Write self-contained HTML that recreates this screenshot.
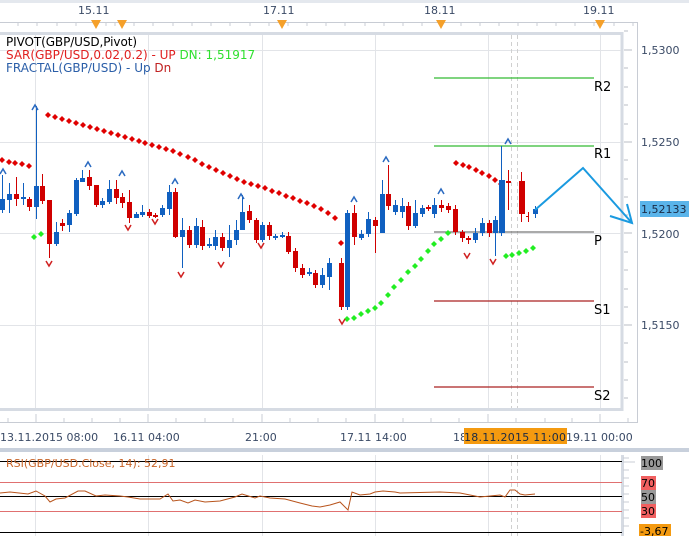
<!DOCTYPE html>
<html><head><meta charset="utf-8"><style>
body{margin:0;width:689px;height:536px;overflow:hidden;background:#fff;font-family:"DejaVu Sans",sans-serif}
svg{position:absolute;left:0;top:0}
</style></head><body>
<svg width="689" height="536" viewBox="0 0 689 536" font-family="DejaVu Sans, sans-serif">
<rect x="0" y="0" width="689" height="536" fill="#fff"/>
<rect x="0" y="0" width="689" height="3" fill="#e4e8ee"/>
<g fill="#3a4a66" font-size="11">
<text x="78" y="14">15.11</text><text x="263" y="14">17.11</text><text x="424" y="14">18.11</text><text x="583" y="14">19.11</text>
</g>
<line x1="0" y1="22.5" x2="637" y2="22.5" stroke="#c8ccd4"/>
<g stroke="#c8ccd4">
<path d="M18 22v4M37 22v4M57 22v4M76 22v4M96 22v4M106 22v4M115 22v4M134 22v4M153 22v4M173 22v4M192 22v4M211 22v4M230 22v4M250 22v4M269 22v4M288 22v4M307 22v4M326 22v4M345 22v4M365 22v4M384 22v4M403 22v4M422 22v4M441 22v4M461 22v4M480 22v4M499 22v4M518 22v4M537 22v4M556 22v4M575 22v4M594 22v4M614 22v4M633 22v4"/>
</g>
<g fill="#f5a02a">
<path d="M91 20h10l-5 9z"/><path d="M117 20h10l-5 9z"/><path d="M277 20h10l-5 9z"/><path d="M436 20h10l-5 9z"/><path d="M595 20h10l-5 9z"/>
</g>
<line x1="637.5" y1="22" x2="637.5" y2="423" stroke="#c8ccd4"/>
<rect x="-3" y="33.5" width="625" height="376" fill="#fff" stroke="#d6dbe3" stroke-width="3"/>
<g stroke="#e2e4e8">
<path d="M35.5 35v373M148.5 35v373M262.5 35v373M375.5 35v373M488.5 35v373M600.5 35v373"/>
<path d="M0 50.5h621M0 142.5h621M0 233.5h621M0 325.5h621"/>
</g>
<path d="M511.5 35v373M517.5 35v373" stroke="#d0d0d0" stroke-dasharray="4,3"/>
<g stroke="#b8bcc4">
<path d="M624 50h8M624 142h8M624 233h8M624 325h8"/>
<path d="M624 68h4M624 87h4M624 105h4M624 124h4M624 160h4M624 179h4M624 197h4M624 215h4M624 252h4M624 270h4M624 289h4M624 307h4M624 343h4M624 362h4M624 380h4M624 398h4M624 31h4"/>
</g>
<g fill="#3a4a66" font-size="11">
<text x="641" y="54">1,5300</text><text x="641" y="146">1,5250</text><text x="641" y="238">1,5200</text><text x="641" y="329">1,5150</text>
</g>
<rect x="640" y="201" width="49" height="16" fill="#5ab4ea"/>
<text x="641" y="213" fill="#1a2a44" font-size="11">1,52133</text>
<g font-size="12">
<text x="6" y="46" fill="#000" textLength="131">PIVOT(GBP/USD,Pivot)</text>
<text x="6" y="59" fill="#e02020">SAR(GBP/USD,0.02,0.2) -  UP  <tspan fill="#30e030">DN: 1,51917</tspan></text>
<text x="6" y="72" fill="#2a5ea8">FRACTAL(GBP/USD) -  Up  <tspan fill="#c02020">Dn</tspan></text>
</g>
<g stroke-width="1.2">
<path d="M434 78h160M434 146h160" stroke="#33bb33"/>
<path d="M434 232h160" stroke="#777"/>
<path d="M434 301h160M434 387h160" stroke="#aa2020"/>
</g>
<g font-size="13" fill="#000"><text x="594" y="91">R2</text><text x="594" y="158">R1</text><text x="594" y="245">P</text><text x="594" y="314">S1</text><text x="594" y="400">S2</text></g>
<g fill="#e00000">
<path id="d" d="M0-3l3 3-3 3-3-3z" transform="translate(2,160)"/>
<use href="#d" x="7" y="2"/><use href="#d" x="13" y="3"/><use href="#d" x="20" y="4"/><use href="#d" x="27" y="6"/>
<use href="#d" x="46" y="-45"/><use href="#d" x="53" y="-43"/><use href="#d" x="60" y="-41"/><use href="#d" x="67" y="-39"/><use href="#d" x="74" y="-37"/><use href="#d" x="81" y="-35"/><use href="#d" x="88" y="-33"/><use href="#d" x="95" y="-31"/><use href="#d" x="102" y="-29"/><use href="#d" x="109" y="-27"/><use href="#d" x="116" y="-25"/><use href="#d" x="123" y="-23"/><use href="#d" x="130" y="-21"/><use href="#d" x="137" y="-19"/><use href="#d" x="143" y="-17"/><use href="#d" x="150" y="-15"/><use href="#d" x="157" y="-13"/><use href="#d" x="164" y="-11"/><use href="#d" x="171" y="-9"/><use href="#d" x="178" y="-6"/><use href="#d" x="186" y="-3"/><use href="#d" x="193" y="0"/><use href="#d" x="200" y="4"/><use href="#d" x="207" y="7"/><use href="#d" x="214" y="10"/><use href="#d" x="221" y="13"/><use href="#d" x="228" y="16"/><use href="#d" x="235" y="19"/><use href="#d" x="242" y="22"/><use href="#d" x="249" y="24"/><use href="#d" x="256" y="26"/><use href="#d" x="263" y="28"/><use href="#d" x="270" y="31"/><use href="#d" x="277" y="33"/><use href="#d" x="284" y="36"/><use href="#d" x="291" y="38"/><use href="#d" x="298" y="41"/><use href="#d" x="305" y="43"/><use href="#d" x="312" y="46"/><use href="#d" x="319" y="49"/><use href="#d" x="326" y="53"/><use href="#d" x="333" y="58"/><use href="#d" x="339" y="83"/>
<use href="#d" x="454" y="3"/><use href="#d" x="461" y="5"/><use href="#d" x="467" y="7"/><use href="#d" x="474" y="10"/><use href="#d" x="480" y="13"/><use href="#d" x="487" y="16"/><use href="#d" x="493" y="20"/><use href="#d" x="499" y="24"/>
</g>
<g fill="#22ee22">
<path id="g" d="M0-3l3 3-3 3-3-3z" transform="translate(34,237)"/>
<use href="#g" x="7" y="-3"/>
<use href="#g" x="313" y="82"/><use href="#g" x="320" y="81"/><use href="#g" x="327" y="77"/><use href="#g" x="334" y="74"/><use href="#g" x="341" y="71"/><use href="#g" x="347" y="66"/><use href="#g" x="354" y="58"/><use href="#g" x="360" y="50"/><use href="#g" x="367" y="43"/><use href="#g" x="374" y="35"/><use href="#g" x="381" y="29"/><use href="#g" x="387" y="22"/><use href="#g" x="394" y="14"/><use href="#g" x="400" y="7"/><use href="#g" x="407" y="2"/><use href="#g" x="414" y="-4"/>
<use href="#g" x="472" y="19"/><use href="#g" x="478" y="18"/><use href="#g" x="485" y="16"/><use href="#g" x="492" y="14"/><use href="#g" x="499" y="11"/>
</g>
<g stroke-width="1">
<g stroke="#1060c0"><path d="M2.5 175v38M9.5 183v30M23.5 183v22M36.5 106v113M56.5 222v24M69.5 210v22M76.5 178v38M82.5 170v12M102.5 198v10M109.5 180v24M136.5 212v6M142.5 205v12M162.5 205v12M169.5 185v30M182.5 218v50M196.5 218v30M209.5 238v10M215.5 230v20M229.5 225v32M236.5 220v25M242.5 195v35M262.5 222v20M275.5 234v6M282.5 232v6M309.5 268v8M322.5 268v20M329.5 258v32M347.5 210v100M361.5 230v10M368.5 212v25M382.5 180v38M395.5 200v15M402.5 198v20M415.5 200v28M422.5 205v12M434.5 198v20M475.5 228v15M482.5 218v18M495.5 216v40M501.5 146v90M535.5 206v12"/></g>
<g stroke="#d00000"><path d="M16.5 177v29M29.5 197v14M42.5 174v30M49.5 200v58M62.5 219v12M89.5 170v20M96.5 185v22M116.5 180v24M122.5 193v15M129.5 190v33M149.5 209v9M155.5 213v5M175.5 188v50M189.5 226v22M202.5 220v30M222.5 233v18M249.5 205v18M256.5 218v25M269.5 222v18M288.5 232v22M295.5 248v24M302.5 264v14M315.5 270v18M341.5 258v52M354.5 205v40M375.5 217v36M388.5 165v45M408.5 202v28M428.5 205v6M441.5 200v12M448.5 203v10M455.5 205v30M462.5 230v12M468.5 236v8M489.5 220v17M508.5 170v40M521.5 172v50M528.5 212v10"/></g>
</g>
<g fill="#1060c0">
<rect x="0" y="199" width="5" height="11"/><rect x="7" y="194" width="5" height="6"/><rect x="21" y="197" width="5" height="2"/><rect x="34" y="186" width="5" height="21"/><rect x="54" y="232" width="5" height="12"/><rect x="67" y="213" width="5" height="12"/><rect x="74" y="180" width="5" height="34"/><rect x="80" y="178" width="5" height="4"/><rect x="100" y="201" width="5" height="4"/><rect x="107" y="189" width="5" height="13"/><rect x="134" y="214" width="5" height="4"/><rect x="140" y="212" width="5" height="3"/><rect x="160" y="208" width="5" height="7"/><rect x="167" y="192" width="5" height="17"/><rect x="180" y="230" width="5" height="7"/><rect x="194" y="226" width="5" height="19"/><rect x="207" y="244" width="5" height="2"/><rect x="213" y="237" width="5" height="9"/><rect x="227" y="240" width="5" height="8"/><rect x="234" y="230" width="5" height="10"/><rect x="240" y="212" width="5" height="18"/><rect x="260" y="225" width="5" height="15"/><rect x="273" y="236" width="5" height="2"/><rect x="280" y="235" width="5" height="2"/><rect x="307" y="272" width="5" height="2"/><rect x="320" y="275" width="5" height="10"/><rect x="327" y="263" width="5" height="14"/><rect x="345" y="213" width="5" height="94"/><rect x="359" y="234" width="5" height="4"/><rect x="366" y="219" width="5" height="15"/><rect x="380" y="194" width="5" height="39"/><rect x="393" y="205" width="5" height="7"/><rect x="400" y="206" width="5" height="6"/><rect x="413" y="213" width="5" height="13"/><rect x="420" y="208" width="5" height="6"/><rect x="432" y="205" width="5" height="9"/><rect x="473" y="233" width="5" height="7"/><rect x="480" y="223" width="5" height="10"/><rect x="493" y="220" width="5" height="13"/><rect x="499" y="180" width="6" height="53"/><rect x="533" y="209" width="5" height="5"/>
</g>
<g fill="#d00000">
<rect x="14" y="194" width="5" height="5"/><rect x="27" y="199" width="5" height="8"/><rect x="40" y="186" width="5" height="15"/><rect x="47" y="200" width="5" height="44"/><rect x="60" y="223" width="5" height="3"/><rect x="87" y="177" width="5" height="9"/><rect x="94" y="185" width="5" height="20"/><rect x="114" y="189" width="5" height="9"/><rect x="120" y="197" width="5" height="6"/><rect x="127" y="202" width="5" height="16"/><rect x="147" y="212" width="5" height="4"/><rect x="153" y="215" width="5" height="2"/><rect x="173" y="192" width="5" height="45"/><rect x="187" y="230" width="5" height="15"/><rect x="200" y="227" width="5" height="19"/><rect x="220" y="237" width="5" height="11"/><rect x="247" y="211" width="5" height="9"/><rect x="254" y="220" width="5" height="20"/><rect x="267" y="225" width="5" height="11"/><rect x="286" y="236" width="5" height="16"/><rect x="293" y="251" width="5" height="17"/><rect x="300" y="268" width="5" height="7"/><rect x="313" y="273" width="5" height="12"/><rect x="339" y="263" width="5" height="44"/><rect x="352" y="213" width="5" height="24"/><rect x="373" y="220" width="5" height="6"/><rect x="386" y="194" width="5" height="12"/><rect x="406" y="206" width="5" height="20"/><rect x="426" y="207" width="5" height="2"/><rect x="439" y="205" width="5" height="3"/><rect x="446" y="206" width="5" height="4"/><rect x="453" y="209" width="5" height="23"/><rect x="460" y="232" width="5" height="6"/><rect x="466" y="238" width="5" height="2"/><rect x="487" y="223" width="5" height="10"/><rect x="506" y="181" width="5" height="2"/><rect x="519" y="181" width="6" height="33"/><rect x="526" y="216" width="3" height="1"/>
</g>
<g fill="none" stroke="#2a6ac0" stroke-width="1.5">
<path d="M32 110l3-5 3 5M0 174l3-5 3 5M85 167l3-5 3 5M119 176l3-5 3 5M172 184l3-5 3 5M238 199l3-5 3 5M351 202l3-5 3 5M383 162l3-5 3 5M438 194l3-5 3 5M505 144l3-5 3 5"/>
</g>
<g fill="none" stroke="#d02020" stroke-width="1.5">
<path d="M46 261l3 5 3-5M125 225l3 5 3-5M152 219l3 5 3-5M178 272l3 5 3-5M218 262l3 5 3-5M258 243l3 5 3-5M339 319l3 5 3-5M464 253l3 5 3-5M490 259l3 5 3-5"/>
</g>
<g stroke="#1a9ae0" stroke-width="2" fill="none">
<path d="M535 210L583 168L632 223"/><path d="M610 216L632 223L627 204"/>
</g>
<line x1="0" y1="422.5" x2="637" y2="422.5" stroke="#c8ccd4"/>
<g stroke="#c8ccd4"><path d="M8 418v4M36 414v8M64 418v4M92 418v4M120 418v4M148 414v8M176 418v4M205 418v4M233 418v4M262 414v8M290 418v4M318 418v4M346 418v4M375 414v8M403 418v4M431 418v4M459 418v4M488 414v8M516 418v4M545 418v4M572 418v4M600 414v8M628 418v4"/></g>
<g fill="#3a4a66" font-size="11">
<text x="0" y="441">13.11.2015 08:00</text><text x="113" y="441">16.11 04:00</text><text x="245" y="441">21:00</text><text x="340" y="441">17.11 14:00</text><text x="453" y="441">18</text><text x="566" y="441">19.11 00:00</text>
</g>
<rect x="464" y="428" width="103" height="16" fill="#f49a10"/>
<text x="464" y="441" font-size="11" fill="#1a2a44" textLength="102">18.11.2015 11:00</text>
<rect x="0" y="448" width="689" height="4" fill="#c8d0dc"/>
<g stroke="#e2e4e8"><path d="M35.5 455v81M148.5 455v81M262.5 455v81M375.5 455v81M488.5 455v81M600.5 455v81"/></g>
<path d="M511.5 455v81M517.5 455v81" stroke="#d0d0d0" stroke-dasharray="4,3"/>
<line x1="622.5" y1="455" x2="622.5" y2="536" stroke="#d6dbe3" stroke-width="3"/>
<g stroke="#000"><path d="M0 461.5h622M0 496.5h622M0 532.5h622"/></g>
<g stroke="#e07070"><path d="M0 482.5h622M0 511.5h622"/></g>
<text x="6" y="467" font-size="11" fill="#c86428">RSI(GBP/USD.Close, 14): 52,91</text>
<polyline fill="none" stroke="#b8541c" stroke-width="1" points="0,493 10,492 28,494 36,491 45,496 50,502 56,499 65,498 78,491 85,491 96,496 105,495 120,496 128,497 140,499 160,499 168,494 173,501 180,500 188,503 195,500 205,502 220,501 235,497 242,494 255,498 260,496 270,498 285,499 300,503 312,506 320,507 330,505 340,502 348,510 352,492 360,495 370,494 375,492 383,491 395,492 400,493 440,492 460,493 480,497 500,495 505,497 510,490 515,490 520,494 525,495 535,494"/>
<g stroke="#c8ccd4"><path d="M623 458h6M623 462h12M623 470h6M623 478h6M623 486h6M623 494h6M623 502h6M623 510h6M623 518h6M623 526h6"/></g>
<g font-size="11" fill="#000">
<rect x="641" y="456" width="22" height="14" fill="#999"/><text x="641" y="467">100</text>
<rect x="641" y="476" width="15" height="14" fill="#f06060"/><text x="641" y="487">70</text>
<rect x="641" y="490" width="15" height="14" fill="#999"/><text x="641" y="501">50</text>
<rect x="641" y="504" width="15" height="14" fill="#f06060"/><text x="641" y="515">30</text>
<rect x="639" y="524" width="32" height="12" fill="#f49a10"/><text x="640" y="535">-3,67</text>
</g>
</svg>
</body></html>
